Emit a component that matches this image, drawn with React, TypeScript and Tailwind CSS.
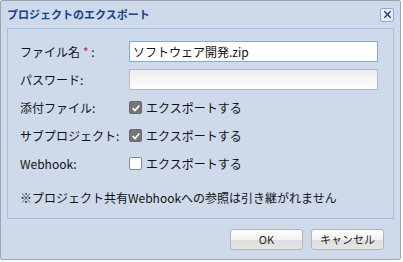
import React, { useState } from 'react';

const font = { fontFamily: '"Noto Sans CJK JP", "Noto Sans", sans-serif' };

const Check: React.FC<{ checked: boolean; onChange: () => void; label: string }> = ({ checked, onChange, label }) => (
  <label className="flex items-center gap-[4px] cursor-pointer select-none">
    <span
      onClick={onChange}
      className={`flex w-[13px] h-[13px] items-center justify-center rounded-[2px] border ${
        checked ? 'bg-[#757575] border-[#6a6a6a]' : 'bg-white border-[#8a8a8a]'
      }`}
    >
      {checked && (
        <svg viewBox="0 0 12 12" className="w-[10px] h-[10px]">
          <path d="M2 6.2 L4.8 9 L10 3" fill="none" stroke="white" strokeWidth="2" />
        </svg>
      )}
    </span>
    <span className="text-[12px] text-[#111]">{label}</span>
  </label>
);

export default function App() {
  const [fileName, setFileName] = useState('ソフトウェア開発.zip');
  const [password, setPassword] = useState('');
  const [attach, setAttach] = useState(true);
  const [sub, setSub] = useState(true);
  const [hook, setHook] = useState(false);

  return (
    <div className="w-[403px] h-[262px] bg-white" style={font}>
      <div className="w-[401px] h-[260px] flex flex-col bg-[#cedaea] border border-[#9aa6b5] rounded-[2px]">
        {/* Title bar */}
        <div className="h-[27px] flex items-center justify-between pl-[6px] pr-[6px]">
          <span className="text-[11px] font-bold text-[#15428b] leading-none">プロジェクトのエクスポート</span>
          <button className="w-[14px] h-[14px] flex items-center justify-center bg-[#e6eef8] border border-[#8ea9cf] rounded-[2px]">
            <svg viewBox="0 0 10 10" className="w-[9px] h-[9px]">
              <path d="M1.5 1.5 L8.5 8.5 M8.5 1.5 L1.5 8.5" stroke="#1b3f7a" strokeWidth="1.5" />
            </svg>
          </button>
        </div>

        {/* Body */}
        <div className="mx-[6px] h-[191px] border border-[#a4bfe6] pl-[12px] pr-[15px] pt-[12px]">
          <div className="grid grid-cols-[109px_1fr] gap-y-[7px] items-center text-[12px] text-[#111]">
            <span>
              ファイル名<span className="text-[#e02020] ml-[3px]">*</span> :
            </span>
            <input
              value={fileName}
              onChange={(e) => setFileName(e.target.value)}
              className="h-[21px] w-full px-[3px] bg-white border border-[#7eadd9] outline-none text-[12px]"
            />
            <span>パスワード:</span>
            <input
              type="password"
              value={password}
              onChange={(e) => setPassword(e.target.value)}
              className="h-[21px] w-full px-[3px] bg-gradient-to-b from-[#ececec] to-white border border-[#b5b8c8] outline-none text-[12px]"
            />
            <span className="h-[21px] flex items-center">添付ファイル:</span>
            <Check checked={attach} onChange={() => setAttach(!attach)} label="エクスポートする" />
            <span className="h-[21px] flex items-center">サブプロジェクト:</span>
            <Check checked={sub} onChange={() => setSub(!sub)} label="エクスポートする" />
            <span className="h-[21px] flex items-center">Webhook:</span>
            <Check checked={hook} onChange={() => setHook(!hook)} label="エクスポートする" />
          </div>
          <p className="mt-[15px] text-[12px] text-[#111]">※プロジェクト共有Webhookへの参照は引き継がれません</p>
        </div>

        {/* Footer */}
        <div className="flex justify-end gap-[8px] pr-[16px] pt-[10px]">
          {['OK', 'キャンセル'].map((t) => (
            <button
              key={t}
              className="w-[73px] h-[21px] rounded-[3px] border border-[#b4b4b4] text-[11px] text-[#222] bg-[linear-gradient(#fdfdfd_0%,#f2f2f2_50%,#dedede_51%,#e4e4e4_100%)]"
            >
              {t}
            </button>
          ))}
        </div>
      </div>
    </div>
  );
}
